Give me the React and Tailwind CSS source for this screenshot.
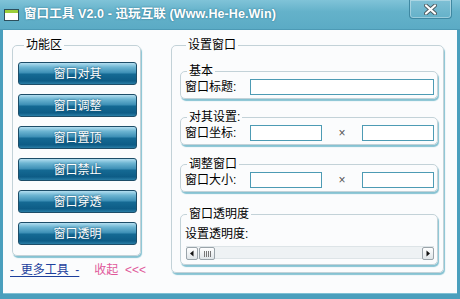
import React from "react";

const F = { fontFamily: '"Liberation Sans", "Noto Sans CJK SC", sans-serif' };

function Btn({ children }) {
  return (
    <div className="h-[23px] w-[119px] rounded-[3px] border border-[#1d4d68] bg-[linear-gradient(to_bottom,#b3def0_0%,#6db5d2_20%,#3a8db4_48%,#156a94_52%,#0d5c86_85%,#2a7ea6_100%)] flex items-center justify-center text-[12px] leading-none text-white [text-shadow:0_0_2px_#0b3f5c]">
      {children}
    </div>
  );
}

function Group({ label, className = "", children }) {
  return (
    <fieldset
      className={
        "rounded-[5px] border border-[#c3d2d8] shadow-[1px_2px_1px_#86c2d2] " +
        className
      }
    >
      <legend className="ml-[6px] px-[2px] text-[12px] leading-[14px] text-black">
        {label}
      </legend>
      {children}
    </fieldset>
  );
}

function Input({ w }) {
  return <div className={"h-[16px] border border-[#4d9bb4] bg-white " + w} />;
}

function Arrow({ dir }) {
  return (
    <div className="h-[13px] w-[12px] rounded-[2px] border border-[#9aa4aa] bg-[linear-gradient(to_bottom,#ffffff,#dfe5e8)] flex items-center justify-center">
      <svg width="6" height="7" viewBox="0 0 6 7">
        {dir === "l" ? (
          <path d="M4.5 0.5 L1 3.5 L4.5 6.5 Z" fill="#111" />
        ) : (
          <path d="M1.5 0.5 L5 3.5 L1.5 6.5 Z" fill="#111" />
        )}
      </svg>
    </div>
  );
}

export default function App() {
  return (
    <div
      className="w-[460px] h-[299px] flex flex-col bg-[#4a9fbd] overflow-hidden"
      style={F}
    >
      {/* title bar */}
      <div className="h-[30px] shrink-0 flex items-center bg-[linear-gradient(to_bottom,#80c3d8,#64b2ca_40%,#5babc5)] border-b border-[#4d9ab5] relative">
        <div className="ml-[4px] w-[15px] h-[12px] border border-[#2d4f5c] bg-white flex flex-col">
          <div className="h-[3px] bg-[#9ccf3a]" />
        </div>
        <span className="ml-[5px] text-[12.5px] tracking-[0.1px] font-bold text-white [text-shadow:0_0_2px_#2b6f88]">
          窗口工具 V2.0 - 迅玩互联 (Www.He-He.Win)
        </span>
        <div className="absolute right-[8px] top-0 h-[19px] w-[43px] rounded-b-[4px] border border-t-0 border-[#3f88a2] bg-[linear-gradient(to_bottom,#7fc0d5,#64b1c9)] shadow-[inset_0_0_0_1px_rgba(255,255,255,0.35)] flex items-center justify-center">
          <svg width="13" height="11" viewBox="0 0 13 11">
            <path d="M2 1.5 L11 9.5 M11 1.5 L2 9.5" stroke="#4b5a60" strokeWidth="4" strokeLinecap="round" />
            <path d="M2 1.5 L11 9.5 M11 1.5 L2 9.5" stroke="#ffffff" strokeWidth="2.2" strokeLinecap="round" />
          </svg>
        </div>
      </div>

      {/* body */}
      <div className="flex-1 mx-[3px] mb-[5px] bg-[#fbfcfd] flex border-b border-[#7fc0d3]">
        {/* left column */}
        <div className="w-[137px] shrink-0 flex flex-col pl-[9px] pt-[8px]">
          <Group label="功能区" className="w-[128px] h-[218px] pl-[5px] pr-[3px]">
            <div className="mt-[10px] flex flex-col gap-[9px]">
              <Btn>窗口对其</Btn>
              <Btn>窗口调整</Btn>
              <Btn>窗口置顶</Btn>
              <Btn>窗口禁止</Btn>
              <Btn>窗口穿透</Btn>
              <Btn>窗口透明</Btn>
            </div>
          </Group>
          <div className="mt-[7px] flex text-[12px] leading-[14px] whitespace-pre">
            <span className="ml-[-2px] text-[#1c3f9c] underline underline-offset-2">
              {"-  更多工具  -"}
            </span>
            <span className="ml-[15px] text-[#e0589a]">{"收起  <<<"}</span>
          </div>
        </div>

        {/* right column */}
        <div className="ml-[31px] pt-[8px]">
          <Group label="设置窗口" className="w-[273px] h-[235px] pl-[8px] pr-[5px]">
            <div className="flex flex-col">
              <Group label="基本" className="mt-[12px] pb-[3px]">
                <div className="flex items-center h-[17px] pl-[4px] text-[12px]">
                  <span className="w-[65px]">窗口标题:</span>
                  <Input w="w-[184px]" />
                </div>
              </Group>
              <Group label="对其设置:" className="mt-[11px] pb-[3px]">
                <div className="flex items-center h-[17px] pl-[4px] text-[12px]">
                  <span className="w-[65px]">窗口坐标:</span>
                  <Input w="w-[72px]" />
                  <span className="w-[40px] text-center text-[12px] text-[#555]">×</span>
                  <Input w="w-[72px]" />
                </div>
              </Group>
              <Group label="调整窗口" className="mt-[12px] pb-[3px]">
                <div className="flex items-center h-[17px] pl-[4px] text-[12px]">
                  <span className="w-[65px]">窗口大小:</span>
                  <Input w="w-[72px]" />
                  <span className="w-[40px] text-center text-[12px] text-[#555]">×</span>
                  <Input w="w-[72px]" />
                </div>
              </Group>
              <Group label="窗口透明度" className="mt-[15px] pb-[5px]">
                <div className="mt-[6px] pl-[4px] text-[12px] leading-[14px]">设置透明度:</div>
                <div className="mt-[5px] ml-[5px] mr-[3px] h-[13px] flex bg-[#eef2f4] border-y border-[#dde4e7]">
                  <Arrow dir="l" />
                  <div className="h-[13px] w-[16px] ml-[1px] rounded-[2px] border border-[#9aa4aa] bg-[linear-gradient(to_bottom,#ffffff,#dfe5e8)] flex items-center justify-center gap-[1px]">
                    <div className="w-px h-[6px] bg-[#777]" />
                    <div className="w-px h-[6px] bg-[#777]" />
                    <div className="w-px h-[6px] bg-[#777]" />
                    <div className="w-px h-[6px] bg-[#777]" />
                  </div>
                  <div className="flex-1" />
                  <Arrow dir="r" />
                </div>
              </Group>
            </div>
          </Group>
        </div>
      </div>
    </div>
  );
}
